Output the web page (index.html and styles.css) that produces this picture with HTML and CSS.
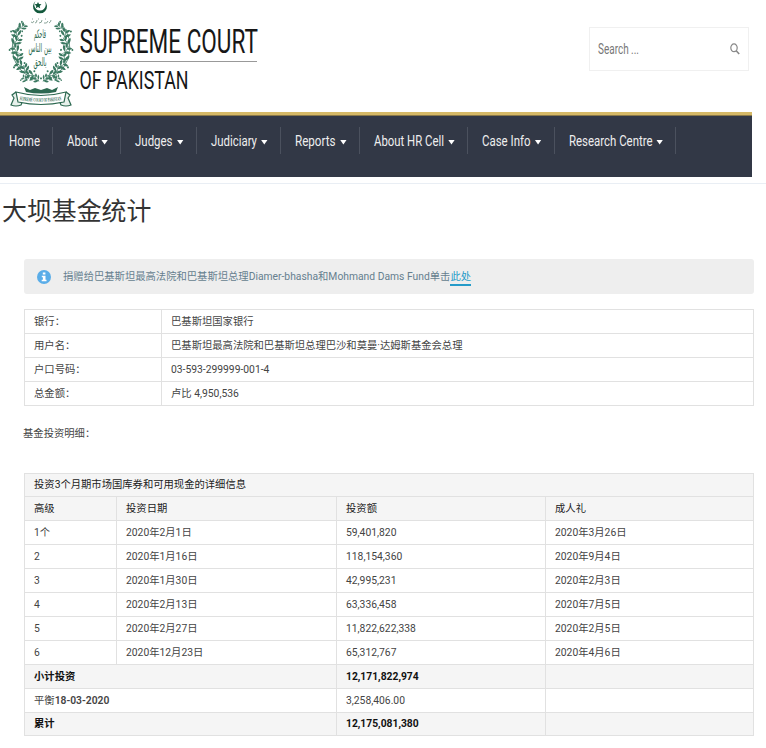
FILE: index.html
```
<!DOCTYPE html>
<html lang="zh-CN">
<head>
<meta charset="utf-8">
<title>大坝基金统计</title>
<link rel="stylesheet" href="styles.css">
</head>
<body>
<header class="header">
  <svg class="brand" width="270" height="112" viewBox="0 0 270 112">
    <defs>
      <g id="sprig">
        <path d="M0 4Q-1 0 0-5" fill="none" stroke="#3c7a62" stroke-width=".7"/>
        <path d="M0 3Q-5 3-6-1Q-1-1 0 3M0 2Q5 1 5-3Q1-2 0 2M0-1Q-4-2-4-5Q0-5 0-1M0-2Q1-6 4-6Q4-2 0-2"/>
        <circle cx="-5" cy="-4" r="1"/><circle cx="4" cy="3" r="1"/>
      </g>
      <g id="branch" fill="#3c7a62">
        <path d="M22 22Q8 37 14 59Q20 75 39 81" fill="none" stroke="#3c7a62" stroke-width=".8"/>
        <use href="#sprig" transform="translate(22 27) rotate(50) scale(.85)"/>
        <use href="#sprig" transform="translate(17 34) rotate(-15)"/>
        <use href="#sprig" transform="translate(16 42) rotate(35)"/>
        <use href="#sprig" transform="translate(16 50) rotate(-38)"/>
        <use href="#sprig" transform="translate(18 58) rotate(15)"/>
        <use href="#sprig" transform="translate(20 65) rotate(-60)"/>
        <use href="#sprig" transform="translate(25 70) rotate(-18)"/>
        <use href="#sprig" transform="translate(31 75) rotate(-85)"/>
        <use href="#sprig" transform="translate(25 79) rotate(-55) scale(.7)"/>
        <use href="#sprig" transform="translate(37 79) rotate(-45) scale(.8)"/>
      </g>
    </defs>
    <path d="M35.500 1A7 7 0 1 0 44.500 1A5.800 5.800 0 1 1 35.500 1Z" fill="#12583c"/>
    <path d="M38 2l1 2 2.500.3-1.800 1.600.5 2.400-2.200-1.200-2.200 1.200.5-2.400-1.800-1.600 2.500-.3z" fill="#12583c"/>
    <path d="M31 22q2 2 3-1m1 2q2 0 2-3m2 3q3 0 3-3m2 3q3 1 4-2m1 2q2-1 2-3M32 19h1m5 0h1m6 0h1" fill="none" stroke="#6d8e80" stroke-width=".8"/>
    <use href="#branch"/>
    <use href="#branch" transform="translate(82 0) scale(-1 1)"/>
    <g class="motto" text-anchor="middle">
      <text x="40" y="38" textLength="12" lengthAdjust="spacingAndGlyphs">فاحكم</text>
      <text x="40" y="52" textLength="23" lengthAdjust="spacingAndGlyphs">بين الناس</text>
      <text x="40" y="66" textLength="13" lengthAdjust="spacingAndGlyphs">بالحق</text>
    </g>
    <path d="M24 87l6 3 5-2 6 2 6-2 5 2 6-3-2 5q-15 3-30 0z" fill="#2d6951"/>
    <path d="M16 92l-4 3 2 3-3 7q5 2 10 0l2-5M66 92l4 3-2 3 3 7q-5 2-10 0l-2-5" fill="#e8f1ec" stroke="#2d6951" stroke-width="1.200"/>
    <path d="M16 92Q41 99 66 92L64 102Q41 107 18 102Z" fill="#fff" stroke="#2d6951" stroke-width="1.200"/>
    <path id="ribbon" d="M19.500 100Q41 103.500 63 100" fill="none"/>
    <text class="ribbon-text"><textPath href="#ribbon" textLength="42" lengthAdjust="spacingAndGlyphs">SUPREME COURT OF PAKISTAN</textPath></text>
    <text class="name" x="79.500" y="52.500" font-size="33" textLength="178.500" lengthAdjust="spacingAndGlyphs">SUPREME COURT</text>
    <path d="M80 61.500H257" stroke="#999"/>
    <text class="name" x="79.500" y="89" font-size="26.500" textLength="109" lengthAdjust="spacingAndGlyphs">OF PAKISTAN</text>
  </svg>
  <div class="search">
    <svg width="42" height="20"><text x="0" y="14.500" font-size="14" textLength="41" lengthAdjust="spacingAndGlyphs">Search ...</text></svg>
    <svg width="10" height="12" viewBox="0 0 10 12" fill="none" stroke="#888"><ellipse cx="4" cy="4.800" rx="3.200" ry="3.900" stroke-width="1.200"/><path d="M6.200 7.800L9.200 11" stroke-width="1.600"/></svg>
  </div>
</header>
<nav class="nav">
  <a><svg width="31.500" height="20"><text y="15" textLength="31" lengthAdjust="spacingAndGlyphs">Home</text></svg></a>
  <a><svg width="30.500" height="20"><text y="15" textLength="30.500" lengthAdjust="spacingAndGlyphs">About</text></svg><i></i></a>
  <a><svg width="37.500" height="20"><text y="15" textLength="37.500" lengthAdjust="spacingAndGlyphs">Judges</text></svg><i></i></a>
  <a><svg width="46" height="20"><text y="15" textLength="46" lengthAdjust="spacingAndGlyphs">Judiciary</text></svg><i></i></a>
  <a><svg width="41" height="20"><text y="15" textLength="40.500" lengthAdjust="spacingAndGlyphs">Reports</text></svg><i></i></a>
  <a><svg width="70" height="20"><text y="15" textLength="70" lengthAdjust="spacingAndGlyphs">About HR Cell</text></svg><i></i></a>
  <a><svg width="48.500" height="20"><text y="15" textLength="48.500" lengthAdjust="spacingAndGlyphs">Case Info</text></svg><i></i></a>
  <a><svg width="83.500" height="20"><text y="15" textLength="83.500" lengthAdjust="spacingAndGlyphs">Research Centre</text></svg><i></i></a>
</nav>
<main class="main">
  <h1>大坝基金统计</h1>
  <div class="notice">
    <svg width="14" height="14" viewBox="0 0 14 14"><circle cx="7" cy="7" r="7" fill="#5aade8"/><path d="M5.800 2.500h2.600v2H5.800zM4.800 5.700h3.700v4.100h1v1.500H4.700V9.800h1.200V7.200H4.800z" fill="#fff"/></svg>
    <p>捐赠给巴基斯坦最高法院和巴基斯坦总理Diamer-bhasha和Mohmand Dams Fund单击<a>此处</a></p>
  </div>
  <table class="account">
    <colgroup><col class="label"><col></colgroup>
    <tr><td>银行：</td><td>巴基斯坦国家银行</td></tr>
    <tr><td>用户名：</td><td>巴基斯坦最高法院和巴基斯坦总理巴沙和莫曼·达姆斯基金会总理</td></tr>
    <tr><td>户口号码：</td><td>03-593-299999-001-4</td></tr>
    <tr><td>总金额：</td><td>卢比 4,950,536</td></tr>
  </table>
  <p class="caption">基金投资明细：</p>
  <table class="funds">
    <colgroup><col class="serial"><col class="date"><col class="amount"><col></colgroup>
    <tr class="head first"><td colspan="4">投资3个月期市场国库券和可用现金的详细信息</td></tr>
    <tr class="head"><td>高级</td><td>投资日期</td><td>投资额</td><td>成人礼</td></tr>
    <tr><td>1个</td><td>2020年2月1日</td><td>59,401,820</td><td>2020年3月26日</td></tr>
    <tr><td>2</td><td>2020年1月16日</td><td>118,154,360</td><td>2020年9月4日</td></tr>
    <tr><td>3</td><td>2020年1月30日</td><td>42,995,231</td><td>2020年2月3日</td></tr>
    <tr><td>4</td><td>2020年2月13日</td><td>63,336,458</td><td>2020年7月5日</td></tr>
    <tr><td>5</td><td>2020年2月27日</td><td>11,822,622,338</td><td>2020年2月5日</td></tr>
    <tr><td>6</td><td>2020年12月23日</td><td>65,312,767</td><td>2020年4月6日</td></tr>
    <tr class="total"><td colspan="2">小计投资</td><td>12,171,822,974</td><td></td></tr>
    <tr><td colspan="2">平衡<b>18-03-2020</b></td><td>3,258,406.00</td><td></td></tr>
    <tr class="total last"><td colspan="2">累计</td><td>12,175,081,380</td><td></td></tr>
  </table>
</main>
</body>
</html>
```
FILE: styles.css
```
* { box-sizing: border-box; }
body {
  margin: 0;
  background: #fff;
  color: #444;
  font: 10.32px/14px Roboto, "Noto Sans CJK SC", sans-serif;
}
svg { display: block; flex: none; overflow: visible; }
.header {
  display: flex;
  justify-content: space-between;
  width: 749px;
  height: 112px;
}
.name { fill: #171717; }
.motto { fill: #24664a; font: 12px "DejaVu Sans", sans-serif; }
.ribbon-text { fill: #2d6951; font: bold 5.5px "Liberation Serif", serif; }
.search {
  display: flex;
  align-items: center;
  justify-content: space-between;
  width: 160px;
  height: 44px;
  margin-top: 27px;
  padding: 0 8px 0 8px;
  border: 1px solid #f0f0f0;
}
.search svg { margin-top: -1px; }
.search text { fill: #777; }
.nav {
  display: flex;
  width: 752px;
  height: 65px;
  padding-top: 12px;
  background: #323846;
  border-top: 3px solid #d5b866;
  box-shadow: inset 0 1px #8b7949;
}
.nav a {
  display: flex;
  align-items: center;
  height: 27px;
  padding: 0 12px 0 14px;
  border-right: 1px solid #4b515e;
}
.nav a:first-child { padding-left: 9px; padding-right: 11px; }
.nav text { fill: #eee; font-size: 15.5px; }
.nav i {
  width: 7px;
  height: 5px;
  margin: 3px 0 0 4.1px;
  background: #fff;
  clip-path: polygon(0 0, 100% 0, 50% 100%);
}
.main {
  width: 766px;
  margin-top: 6px;
  padding-right: 12px;
  border-top: 1px solid #e9eef4;
}
h1 {
  margin: 9px 0 0 2px;
  color: #333;
  font-size: 24.9px;
  font-weight: 400;
  line-height: 38px;
}
.notice {
  display: flex;
  align-items: center;
  gap: 12px;
  height: 35px;
  margin: 28px 0 0 24px;
  padding-left: 13px;
  background: #eee;
  border-radius: 3px;
  color: #667f8e;
}
.notice p { margin: 2px 0 0; }
.notice a {
  display: inline-block;
  border-bottom: 2px solid #259bc9;
  color: #259bc9;
}
table {
  width: 730px;
  margin-left: 24px;
  table-layout: fixed;
  border-collapse: collapse;
}
td {
  height: 24px;
  padding: 0 9px;
  border: 1px solid #e1e1e1;
}
.account { margin-top: 15px; }
.label { width: 137px; }
.caption { margin: 21px 0 32px 23px; }
.serial { width: 92px; }
.date { width: 220px; }
.amount { width: 209px; }
.head td, .total td { background: #f5f5f5; color: #222; }
.first td, .last td { height: 23px; }
.total td { color: #111; font-weight: 700; }
b { font-weight: 600; }
```
